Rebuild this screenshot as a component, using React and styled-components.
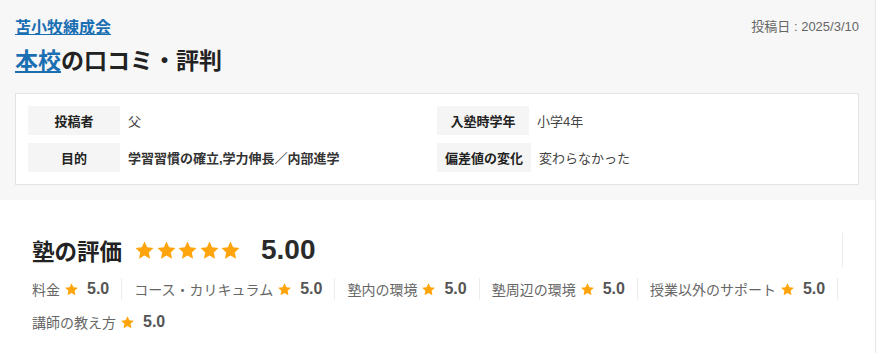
import React from "react";
import styled, { createGlobalStyle } from "styled-components";

const GlobalStyle = createGlobalStyle`
  html, body {
    margin: 0;
    padding: 0;
    background: #fff;
  }
  body {
    font-family: "Liberation Sans", "Noto Sans CJK JP", sans-serif;
    color: #333;
  }
`;

const details = [
  { label: "投稿者", value: "父", strong: false },
  { label: "入塾時学年", value: "小学4年", strong: false },
  { label: "目的", value: "学習習慣の確立,学力伸長／内部進学", strong: true },
  { label: "偏差値の変化", value: "変わらなかった", strong: false },
];

const scores = [
  { name: "料金", score: "5.0" },
  { name: "コース・カリキュラム", score: "5.0" },
  { name: "塾内の環境", score: "5.0" },
  { name: "塾周辺の環境", score: "5.0" },
  { name: "授業以外のサポート", score: "5.0" },
  { name: "講師の教え方", score: "5.0" },
];

const Star = ({ size }) => (
  <StarSvg width={size} height={size} viewBox="0 0 24 24" aria-hidden="true">
    <path d="M12 1.8l3.05 6.6 7.2.85-5.33 4.93 1.42 7.12L12 17.72l-6.34 3.58 1.42-7.12L1.75 9.25l7.2-.85z" />
  </StarSvg>
);

export default function App() {
  return (
    <>
      <GlobalStyle />
      <Page>
        <TopSection>
          <HeadRow>
            <SchoolLink href="#">苫小牧練成会</SchoolLink>
            <PostDate>投稿日 : 2025/3/10</PostDate>
          </HeadRow>
          <Title>
            <TitleLink href="#">本校</TitleLink>の口コミ・評判
          </Title>
          <DetailBox>
            {details.map((d) => (
              <DetailRow key={d.label}>
                <DetailLabel>{d.label}</DetailLabel>
                <DetailValue $strong={d.strong}>{d.value}</DetailValue>
              </DetailRow>
            ))}
          </DetailBox>
        </TopSection>

        <RatingSection>
          <RatingHead>
            <RatingTitle>塾の評価</RatingTitle>
            <Stars>
              {[0, 1, 2, 3, 4].map((i) => (
                <Star key={i} size={21} />
              ))}
            </Stars>
            <TotalScore>5.00</TotalScore>
          </RatingHead>
          <ScoreList>
            {scores.map((s) => (
              <ScoreItem key={s.name}>
                <ScoreName>{s.name}</ScoreName>
                <Star size={15} />
                <ScoreValue>{s.score}</ScoreValue>
              </ScoreItem>
            ))}
          </ScoreList>
        </RatingSection>
      </Page>
    </>
  );
}

const Page = styled.div`
  width: 875px;
  min-height: 353px;
  border-right: 1px solid #e6e6e6;
  background: #fff;
`;

const TopSection = styled.section`
  background: #f7f7f7;
  padding: 16px 16px 15px 15px;
`;

const HeadRow = styled.div`
  display: flex;
  justify-content: space-between;
  align-items: center;
  height: 24px;
`;

const SchoolLink = styled.a`
  font-size: 16px;
  font-weight: 700;
  color: #1a6fb3;
  text-decoration: underline;
  line-height: 24px;
`;

const PostDate = styled.span`
  font-size: 13px;
  color: #666;
  margin-top: -6px;
`;

const Title = styled.h1`
  margin: 5px 0 0;
  font-size: 23px;
  line-height: 32px;
  font-weight: 700;
  color: #222;
`;

const TitleLink = styled.a`
  color: #1a6fb3;
  text-decoration: underline;
`;

const DetailBox = styled.div`
  margin-top: 16px;
  background: #fff;
  border: 1px solid #e3e3e3;
  padding: 12px;
  display: grid;
  grid-template-columns: 1fr 1fr;
  row-gap: 8px;
`;

const DetailRow = styled.div`
  display: flex;
  align-items: center;
  gap: 8px;
`;

const DetailLabel = styled.div`
  min-width: 92px;
  height: 29px;
  padding: 0 8px;
  box-sizing: border-box;
  display: flex;
  align-items: center;
  justify-content: center;
  background: #f5f5f5;
  font-size: 13px;
  font-weight: 700;
  color: #222;
`;

const DetailValue = styled.div`
  font-size: 13px;
  font-weight: ${(p) => (p.$strong ? 700 : 400)};
  color: ${(p) => (p.$strong ? "#333" : "#444")};
`;

const RatingSection = styled.section`
  padding: 33px 32px 20px 32px;
`;

const RatingHead = styled.div`
  display: flex;
  align-items: center;
  height: 34px;
  border-right: 1px solid #ececec;
`;

const RatingTitle = styled.h2`
  margin: 0;
  font-size: 22.5px;
  font-weight: 700;
  color: #222;
`;

const Stars = styled.div`
  display: flex;
  gap: 0.5px;
  margin-left: 12px;
`;

const StarSvg = styled.svg`
  fill: #ffa40a;
  flex: none;
`;

const TotalScore = styled.span`
  margin-left: 20px;
  font-size: 28px;
  font-weight: 700;
  color: #2a2a2a;
`;

const ScoreList = styled.div`
  display: flex;
  flex-wrap: wrap;
  row-gap: 11px;
  column-gap: 12px;
  margin-top: 11px;
`;

const ScoreItem = styled.div`
  display: flex;
  align-items: center;
  height: 22px;
  padding-right: 12px;
  border-right: 1px solid #ececec;

  &:last-child {
    border-right: none;
  }
`;

const ScoreName = styled.span`
  font-size: 14px;
  color: #666;
  margin-right: 4px;
`;

const ScoreValue = styled.span`
  margin-left: 8px;
  font-size: 16px;
  font-weight: 700;
  color: #555;
`;
